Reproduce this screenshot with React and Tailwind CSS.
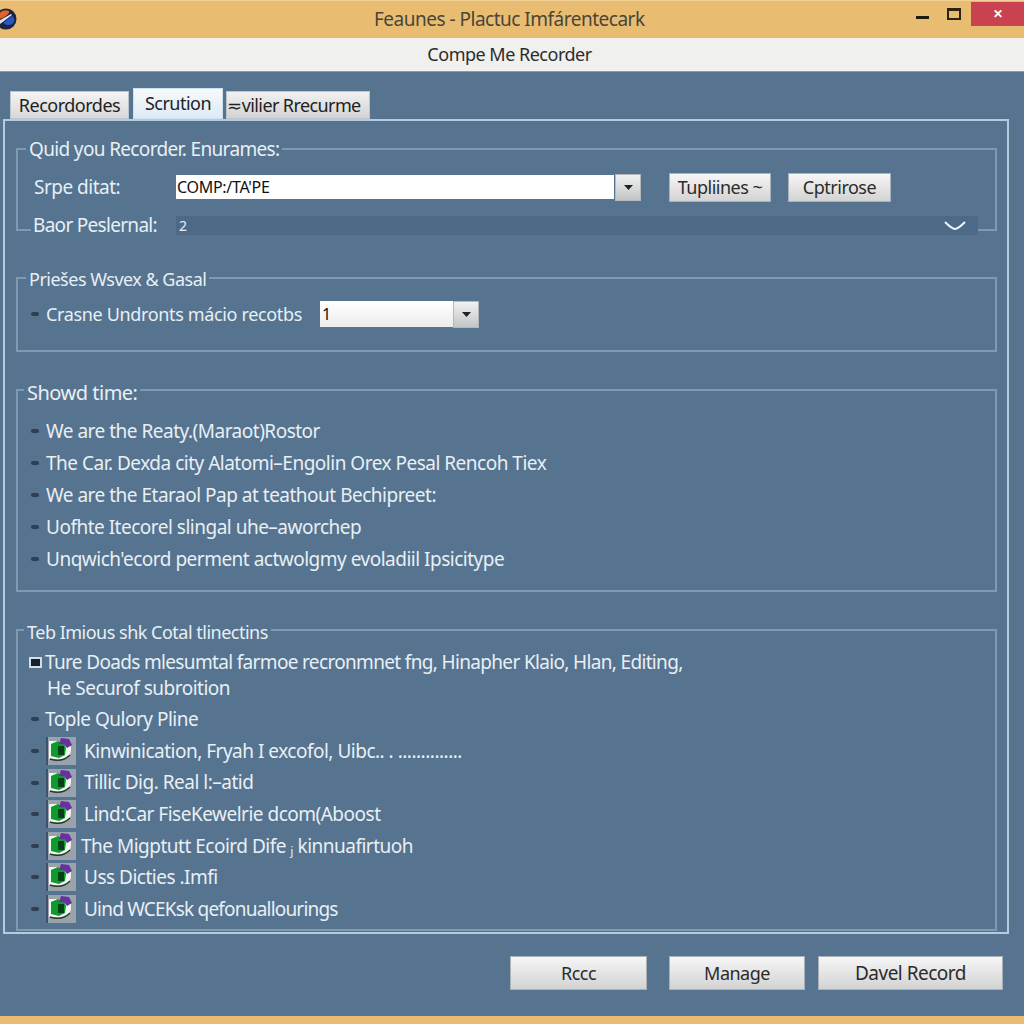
import React from 'react';

const Bullet = () => <span className="block w-2 h-1 bg-[#2f3f50] rounded-sm shrink-0" />;

const Arrow = () => (
  <svg width="9" height="5" viewBox="0 0 9 5">
    <path d="M0 0h9L4.5 5z" fill="#222" />
  </svg>
);

const DropButton = ({ className }) => (
  <div className={`flex items-center justify-center border border-[#b4b8ba] bg-gradient-to-b from-[#f0f1f1] to-[#c2c5c7] ${className}`}>
    <Arrow />
  </div>
);

const Button = ({ children, className }) => (
  <button className={`flex items-center justify-center border border-[#aab2b8] bg-gradient-to-b from-[#f6f6f6] to-[#d3d3d3] text-[#2b2b2b] ${className}`}>
    {children}
  </button>
);

const Group = ({ title, className, legendClass, children }) => (
  <div className={`relative border-2 border-[#7f9ab3] ${className}`}>
    <span className={`absolute px-[3px] bg-[#56748f] leading-[22px] text-[#e8eff5] whitespace-nowrap ${legendClass}`}>{title}</span>
    {children}
  </div>
);

const RowIcon = () => (
  <svg width="30" height="28" viewBox="0 0 30 28" className="shrink-0">
    <rect width="30" height="28" fill="#98a3ab" />
    <rect width="2" height="28" fill="#3f5269" />
    <path d="M3 4h17c4 0 5 3 5 8s-2 9-7 10H3z" fill="#f4f6f0" />
    <path d="M5 7l7-3 6 2 2 5-1 7-6 3-8-2z" fill="#0f9a2e" />
    <path d="M12 9h6v9h-6z" fill="#06401a" />
    <path d="M13 7l2-6 8 1 3 6-5 3-3-4z" fill="#6a2fa0" />
    <path d="M4 22c6 2 14 2 20-4" stroke="#27352c" strokeWidth="1.4" fill="none" />
  </svg>
);

const iconRows = [
  { text: 'Kinwinication, Fryah I excofol, Uibc.. . ..............', cls: 'ml-[8px]' },
  { text: 'Tillic Dig. Real l:–atid', cls: 'ml-[8px]' },
  { text: 'Lind:Car FiseKewelrie dcom(Aboost', cls: 'ml-[8px]' },
  { text: 'The Migptutt Ecoird Dife ⱼ kinnuafirtuoh', cls: 'ml-[5px]' },
  { text: 'Uss Dicties .Imfi', cls: 'ml-[8px]' },
  { text: 'Uind WCEKsk qefonuallourings', cls: 'ml-[8px] tracking-[-0.8px]' },
];

const showdRows = [
  'We are the Reaty.(Maraot)Rostor',
  'The Car. Dexda city Alatomi–Engolin Orex Pesal Rencoh Tiex',
  'We are the Etaraol Pap at teathout Bechipreet:',
  'Uofhte Itecorel slingal uhe–aworchep',
  "Unqwich'ecord perment actwolgmy evoladiil Ipsicitype",
];

export default function App() {
  return (
    <div className="w-[1024px] h-[1024px] overflow-hidden flex flex-col bg-[#56748f] text-[19px] font-['Noto_Sans','Open_Sans',sans-serif] tracking-[-0.5px]">
      {/* title bar */}
      <div className="h-[38px] shrink-0 flex items-start justify-between bg-[#e8bd72] border-t border-[#f0d095]">
        <svg width="17" height="22" viewBox="0 0 17 22" className="mt-[7px] shrink-0">
          <circle cx="6" cy="11" r="10.5" fill="#1a2444" />
          <path d="M-3 9c2-6 8-8 12-6 1 3-5 7-12 9z" fill="#e0642a" />
          <path d="M-3 14L11 6l1 1L0 16z" fill="#dfe6f2" />
          <path d="M3 15l9-7c3 2 3 6 0 8-3 2-6 1-9-1z" fill="#2a56c4" />
        </svg>
        <span className="mt-[5px] ml-[357px] text-[19px] leading-[26px] text-[#4b4537] whitespace-nowrap">Feaunes - Plactuc Imfárentecark</span>
        <div className="ml-auto flex items-start">
          <span className="mt-[15px] w-[13px] h-[3px] bg-[#1f1a10]" />
          <span className="mt-[7px] ml-[18px] w-[14px] h-[12px] border-2 border-t-[3px] border-[#2a2416]" />
          <span className="mt-[1px] ml-[10px] w-[53px] h-[24px] bg-[#c8434f] flex items-center justify-center text-white text-[12px] font-bold">✕</span>
        </div>
      </div>

      {/* caption strip */}
      <div className="h-[34px] shrink-0 flex items-center justify-center pr-[5px] bg-[#f0f0ee] border-b border-[#8d9aa6] text-[18px] text-[#2c2c2c]">
        Compe Me Recorder
      </div>

      {/* tabs */}
      <div className="flex items-end mt-[16px] ml-[10px] h-[31px] text-[#222] text-[18px]">
        <div className="w-[119px] h-[28px] flex items-center justify-center border border-[#b9c5cf] bg-gradient-to-b from-[#f4f4f4] to-[#d8d8d8]">Recordordes</div>
        <div className="ml-[4px] w-[90px] h-[31px] flex items-center justify-center border border-[#cfe0ee] bg-gradient-to-b from-[#f7f9fb] to-[#dcebf7]">Scrution</div>
        <div className="ml-[3px] w-[144px] h-[28px] flex items-center justify-center pr-[8px] border border-[#b9c5cf] bg-gradient-to-b from-[#f1f1f1] to-[#d3d3d3] whitespace-nowrap tracking-[-0.6px]">≂vilier Rrecurme</div>
      </div>

      {/* main panel */}
      <div className="ml-[3px] w-[1006px] h-[815px] shrink-0 border-2 border-[#b4cbe0] px-[11px] pt-[27px] text-[#e8eff5]">
        <Group title="Quid you Recorder. Enurames:" legendClass="-top-[12px] left-[8px] text-[19px] tracking-[-0.65px]" className="h-[83px] w-[981px]">
          <div className="flex items-center h-[30px] mt-[22px]">
            <span className="ml-[16px] w-[142px]">Srpe ditat:</span>
            <div className="w-[438px] h-[24px] bg-white flex items-center pl-[1px] text-[16px] text-[#111] tracking-[-0.3px]">COMP:/TA'PE</div>
            <DropButton className="w-[26px] h-[27px] ml-[1px]" />
            <Button className="w-[102px] h-[29px] ml-[28px] text-[18px]">Tupliines ~</Button>
            <Button className="w-[103px] h-[29px] ml-[17px] text-[18px]">Cptrirose</Button>
          </div>
          <div className="flex items-center h-[19px] mt-[14px]">
            <span className="ml-[13px] w-[145px] pl-[2px] bg-[#56748f] whitespace-nowrap tracking-[-0.7px]">Baor Peslernal:</span>
            <div className="w-[802px] h-[19px] bg-[#4c6a87] flex items-center justify-between pl-[3px] pr-[12px] text-[14px]">
              <span>2</span>
              <svg width="22" height="10" viewBox="0 0 22 10"><path d="M1 1c4 4 7 7 10 7s6-3 10-7" stroke="#f2f6fa" strokeWidth="2" fill="none" /></svg>
            </div>
          </div>
        </Group>

        <Group title="Priešes Wsvex & Gasal" legendClass="-top-[11px] left-[8px] text-[18px]" className="h-[75px] w-[981px] mt-[46px]">
          <div className="flex items-center h-[28px] mt-[21px] ml-[13px]">
            <Bullet />
            <span className="ml-[7px] w-[274px] whitespace-nowrap text-[18px] tracking-[-0.35px]">Crasne Undronts mácio recotbs</span>
            <div className="w-[133px] h-[26px] bg-gradient-to-b from-white to-[#ececec] flex items-center pl-[2px] text-[16px] text-[#111]">1</div>
            <DropButton className="w-[26px] h-[27px]" />
          </div>
        </Group>

        <Group title="Showd time:" legendClass="-top-[9px] left-[6px] text-[20px]" className="h-[203px] w-[981px] mt-[37px]">
          <div className="flex flex-col gap-[10px] mt-[29px] ml-[13px]">
            {showdRows.map((row) => (
              <div key={row} className="flex items-center h-[22px] leading-[22px]">
                <Bullet />
                <span className="ml-[7px] whitespace-nowrap">{row}</span>
              </div>
            ))}
          </div>
        </Group>

        <Group title="Teb Imious shk Cotal tlinectins" legendClass="-top-[10px] left-[6px] text-[18px]" className="h-[302px] w-[981px] mt-[37px]">
          <div className="flex items-center h-[22px] mt-[20px] ml-[11px]">
            <span className="block w-[13px] h-[11px] bg-[#15202c] border-2 border-[#d5dee6] shrink-0" />
            <span className="ml-[3px] whitespace-nowrap tracking-[-0.66px]">Ture Doads mlesumtal farmoe recronmnet fng, Hinapher Klaio, Hlan, Editing,</span>
          </div>
          <div className="h-[22px] leading-[22px] mt-[4px] ml-[29px] whitespace-nowrap">He Securof subroition</div>
          <div className="flex items-center h-[22px] mt-[9px] ml-[13px]">
            <Bullet />
            <span className="ml-[6px] whitespace-nowrap">Tople Qulory Pline</span>
          </div>
          <div className="flex flex-col gap-[1.6px] mt-[6px] ml-[13px]">
            {iconRows.map((row) => (
              <div key={row.text} className="flex items-center h-[30px]">
                <Bullet />
                <span className="ml-[7px]"><RowIcon /></span>
                <span className={`whitespace-nowrap ${row.cls}`}>{row.text}</span>
              </div>
            ))}
          </div>
        </Group>
      </div>

      {/* bottom buttons */}
      <div className="flex mt-[22px] ml-[510px] text-[18px]">
        <Button className="w-[137px] h-[34px]">Rccc</Button>
        <Button className="w-[136px] h-[34px] ml-[22px]">Manage</Button>
        <Button className="w-[185px] h-[34px] ml-[13px] text-[19px]">Davel Record</Button>
      </div>

      <div className="mt-auto h-[8px] shrink-0 bg-[#e8bd72]" />
    </div>
  );
}
